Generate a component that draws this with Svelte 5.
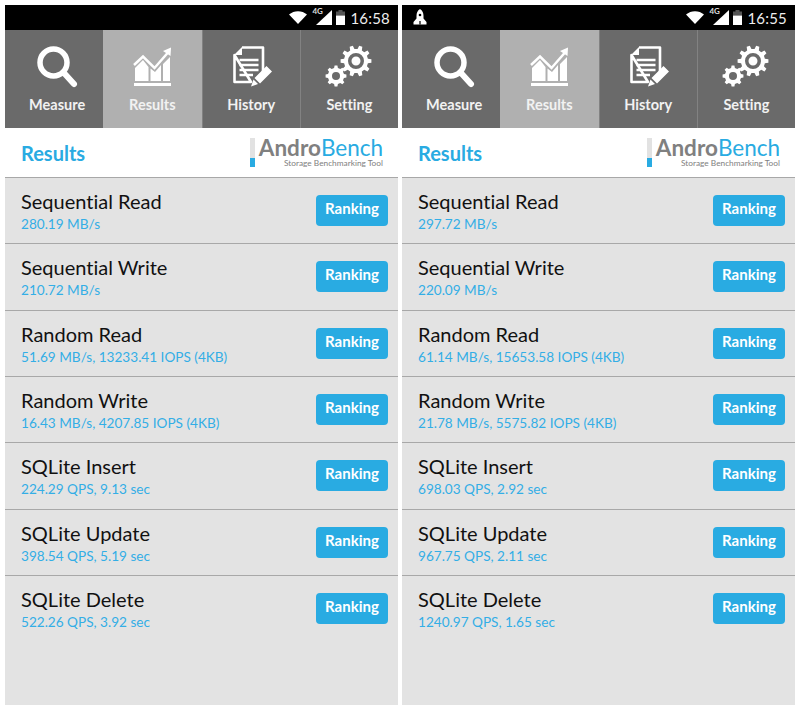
<script>
  const tabs = ['Measure', 'Results', 'History', 'Setting'];

  const left = {
    time: '16:58',
    rocket: false,
    rows: [
      ['Sequential Read', '280.19 MB/s'],
      ['Sequential Write', '210.72 MB/s'],
      ['Random Read', '51.69 MB/s, 13233.41 IOPS (4KB)'],
      ['Random Write', '16.43 MB/s, 4207.85 IOPS (4KB)'],
      ['SQLite Insert', '224.29 QPS, 9.13 sec'],
      ['SQLite Update', '398.54 QPS, 5.19 sec'],
      ['SQLite Delete', '522.26 QPS, 3.92 sec']
    ]
  };

  const right = {
    time: '16:55',
    rocket: true,
    rows: [
      ['Sequential Read', '297.72 MB/s'],
      ['Sequential Write', '220.09 MB/s'],
      ['Random Read', '61.14 MB/s, 15653.58 IOPS (4KB)'],
      ['Random Write', '21.78 MB/s, 5575.82 IOPS (4KB)'],
      ['SQLite Insert', '698.03 QPS, 2.92 sec'],
      ['SQLite Update', '967.75 QPS, 2.11 sec'],
      ['SQLite Delete', '1240.97 QPS, 1.65 sec']
    ]
  };

  const phones = [left, right];

  // gear outline: teeth around a ring
  function gear(cx, cy, r, teeth) {
    let d = '';
    const step = (Math.PI * 2) / teeth;
    for (let i = 0; i < teeth; i++) {
      const a = i * step;
      const pts = [
        [a - step * 0.3, r * 0.78],
        [a - step * 0.17, r],
        [a + step * 0.17, r],
        [a + step * 0.3, r * 0.78]
      ];
      for (const [t, rad] of pts) {
        const x = (cx + Math.cos(t) * rad).toFixed(2);
        const y = (cy + Math.sin(t) * rad).toFixed(2);
        d += (d ? 'L' : 'M') + x + ' ' + y;
      }
    }
    return d + 'Z';
  }
</script>

<div class="screen">
  {#each phones as phone}
    <div class="phone">
      <div class="status">
        {#if phone.rocket}
          <svg class="rocket" width="14" height="16" viewBox="0 0 14 16">
            <path fill="#fff" d="M7 0C9.500 1.500 10.500 4 10.500 7L10.500 9.500 13.500 13 13.500 15.500 0.500 15.500 0.500 13 3.500 9.500 3.500 7C3.500 4 4.500 1.500 7 0Z" />
            <circle cx="7" cy="6" r="1.300" fill="#000" />
            <rect x="6.400" y="12" width="1.200" height="3.500" fill="#000" />
          </svg>
        {/if}
        <div class="status-right">
          <svg width="18" height="13" viewBox="0 0 18 13"><path fill="#fff" d="M0 3.500C5 -1 13 -1 18 3.500L9 13Z" /></svg>
          <div class="signal">
            <span class="lte">4G</span>
            <svg width="16" height="15" viewBox="0 0 16 15"><path fill="#fff" d="M16 0V15H0Z" /></svg>
          </div>
          <svg width="9" height="15" viewBox="0 0 9 15">
            <rect x="2.500" y="0" width="4" height="2" fill="#555" />
            <rect x="0" y="1.500" width="9" height="4" fill="#555" />
            <rect x="0" y="5.500" width="9" height="9.500" fill="#fff" />
          </svg>
          <span class="time">{phone.time}</span>
        </div>
      </div>

      <div class="tabs">
        {#each tabs as tab, i}
          <div class="tab" class:active={i === 1}>
            {#if i === 0}
              <svg width="44" height="44" viewBox="0 0 44 44">
                <circle cx="18.500" cy="17.500" r="13.500" fill="none" stroke="#fff" stroke-width="5.500" />
                <path d="M29 28L39 39" stroke="#fff" stroke-width="6" stroke-linecap="round" />
              </svg>
            {:else if i === 1}
              <svg width="44" height="44" viewBox="0 0 44 44">
                <path fill="#fff" d="M5 36V23L13 15 18.500 22 18.500 36ZM20.500 36V23.500L25 27 31 20V36ZM33 36V19L40 12V36Z" />
                <path fill="none" stroke="#fff" stroke-width="2.500" d="M4 20L13 11.500 24.500 23 38 7.500" />
                <path fill="#fff" d="M33 6L41 2.500 40.500 11Z" />
                <rect x="4" y="38" width="37" height="3" fill="#fff" />
              </svg>
            {:else if i === 2}
              <svg width="44" height="44" viewBox="0 0 44 44">
                <path fill="none" stroke="#fff" stroke-width="2.600" stroke-linejoin="round" d="M13 2.500H34V27M22 37H5.500V10Z" />
                <path fill="#fff" d="M5 10L13 2V10Z" />
                <path stroke="#fff" stroke-width="2.400" d="M10.500 15H29.500M10.500 20H29.500M10.500 25H29.500M10.500 30H24" />
                <path fill="#fff" d="M37.500 21L43 26.500 31 38.500 25.500 33ZM24.500 34.500L29 39 22 41.500Z" />
              </svg>
            {:else}
              <svg width="50" height="44" viewBox="0 0 50 44">
                <path fill="#fff" fill-rule="evenodd" d="{gear(32, 16, 15.500, 10)}M32 8A8 8 0 1 0 32 24A8 8 0 1 0 32 8ZM32 11.500A4.500 4.500 0 1 1 32 20.500A4.500 4.500 0 1 1 32 11.500Z" />
                <path fill="#fff" fill-rule="evenodd" d="{gear(12, 31, 10.500, 8)}M12 27A4 4 0 1 0 12 35A4 4 0 1 0 12 27Z" />
              </svg>
            {/if}
            <span>{tab}</span>
          </div>
        {/each}
      </div>

      <div class="head">
        <h1>Results</h1>
        <div class="logo">
          <div class="logo-bar"></div>
          <div class="logo-text">
            <div class="logo-name"><b>Andro</b><span>Bench</span></div>
            <div class="logo-sub">Storage Benchmarking Tool</div>
          </div>
        </div>
      </div>

      <div class="list">
        {#each phone.rows as row}
          <div class="row">
            <div class="info">
              <div class="name">{row[0]}</div>
              <div class="value">{row[1]}</div>
            </div>
            <button class="rank">Ranking</button>
          </div>
        {/each}
      </div>
    </div>
  {/each}
</div>

<style>
  :global(body) {
    background: #fff;
  }

  .screen {
    width: 800px;
    height: 710px;
    box-sizing: border-box;
    padding: 5px 4px 5px 5px;
    display: grid;
    grid-template-columns: 393px 393px;
    gap: 4px;
    font-family: Lato, "Open Sans", sans-serif;
    font-variant-ligatures: none;
    overflow: hidden;
  }

  .phone {
    display: flex;
    flex-direction: column;
    background: #e3e3e3;
  }

  .status {
    height: 25px;
    background: #000;
    display: flex;
    align-items: center;
    padding: 0 8px 0 11px;
    flex: none;
  }

  .rocket {
    margin-top: -1px;
  }

  .status-right {
    margin-left: auto;
    display: flex;
    align-items: center;
    gap: 4px;
  }

  .signal {
    position: relative;
    display: flex;
    margin-left: 5px;
  }

  .lte {
    position: absolute;
    left: -4px;
    top: -4px;
    font-size: 8px;
    font-weight: 700;
    color: #ddd;
  }

  .time {
    color: #eee;
    font-size: 15px;
    letter-spacing: 0.2px;
    margin-left: 1px;
  }

  .tabs {
    height: 98px;
    display: grid;
    grid-template-columns: repeat(4, 1fr);
    flex: none;
  }

  .tab {
    background: #6a6a6a;
    border-left: 1px solid #828282;
    display: flex;
    flex-direction: column;
    align-items: center;
    padding-top: 15px;
    gap: 7px;
    color: #f2f2f2;
    font-size: 14.5px;
    font-weight: 700;
  }

  .tab svg {
    height: 44px;
  }

  .tab:first-child {
    border-left: none;
    padding-left: 6px;
  }

  .tab.active {
    background: #b0b0b0;
    border-left: none;
  }

  .head {
    height: 50px;
    box-sizing: border-box;
    background: #fff;
    display: flex;
    align-items: center;
    justify-content: space-between;
    padding: 0 15px 0 16px;
    border-bottom: 1px solid #a8a8a8;
    flex: none;
  }

  h1 {
    margin: 0;
    font-size: 20px;
    font-weight: 700;
    color: #29abe2;
  }

  .logo {
    display: flex;
    gap: 4px;
    height: 29px;
  }

  .logo-bar {
    width: 5px;
    background: linear-gradient(#e2e2e2 70%, #29abe2 70%);
  }

  .logo-text {
    display: flex;
    flex-direction: column;
    align-items: flex-end;
  }

  .logo-name {
    font-size: 22.5px;
    line-height: 20px;
    color: #29abe2;
  }

  .logo-name b {
    color: #808080;
    font-weight: 700;
  }

  .logo-sub {
    font-size: 8.3px;
    line-height: 9px;
    margin-top: 1px;
    color: #808080;
  }

  .list {
    display: flex;
    flex-direction: column;
  }

  .row {
    height: 66.33px;
    box-sizing: border-box;
    display: flex;
    align-items: flex-start;
    justify-content: space-between;
    padding: 11px 10px 0 16px;
    border-bottom: 1px solid #a8a8a8;
  }

  .row:last-child {
    border-bottom: none;
  }

  .name {
    font-size: 20px;
    line-height: 24px;
    color: #111;
  }

  .value {
    font-size: 13.6px;
    line-height: 18px;
    margin-top: 2px;
    color: #33aee6;
  }

  .rank {
    width: 72px;
    height: 31px;
    margin-top: 6px;
    border: none;
    border-radius: 4px;
    background: #29abe2;
    color: #fff;
    font-family: inherit;
    font-size: 15px;
    font-weight: 700;
    line-height: 27px;
    padding: 0 0 4px;
  }
</style>
